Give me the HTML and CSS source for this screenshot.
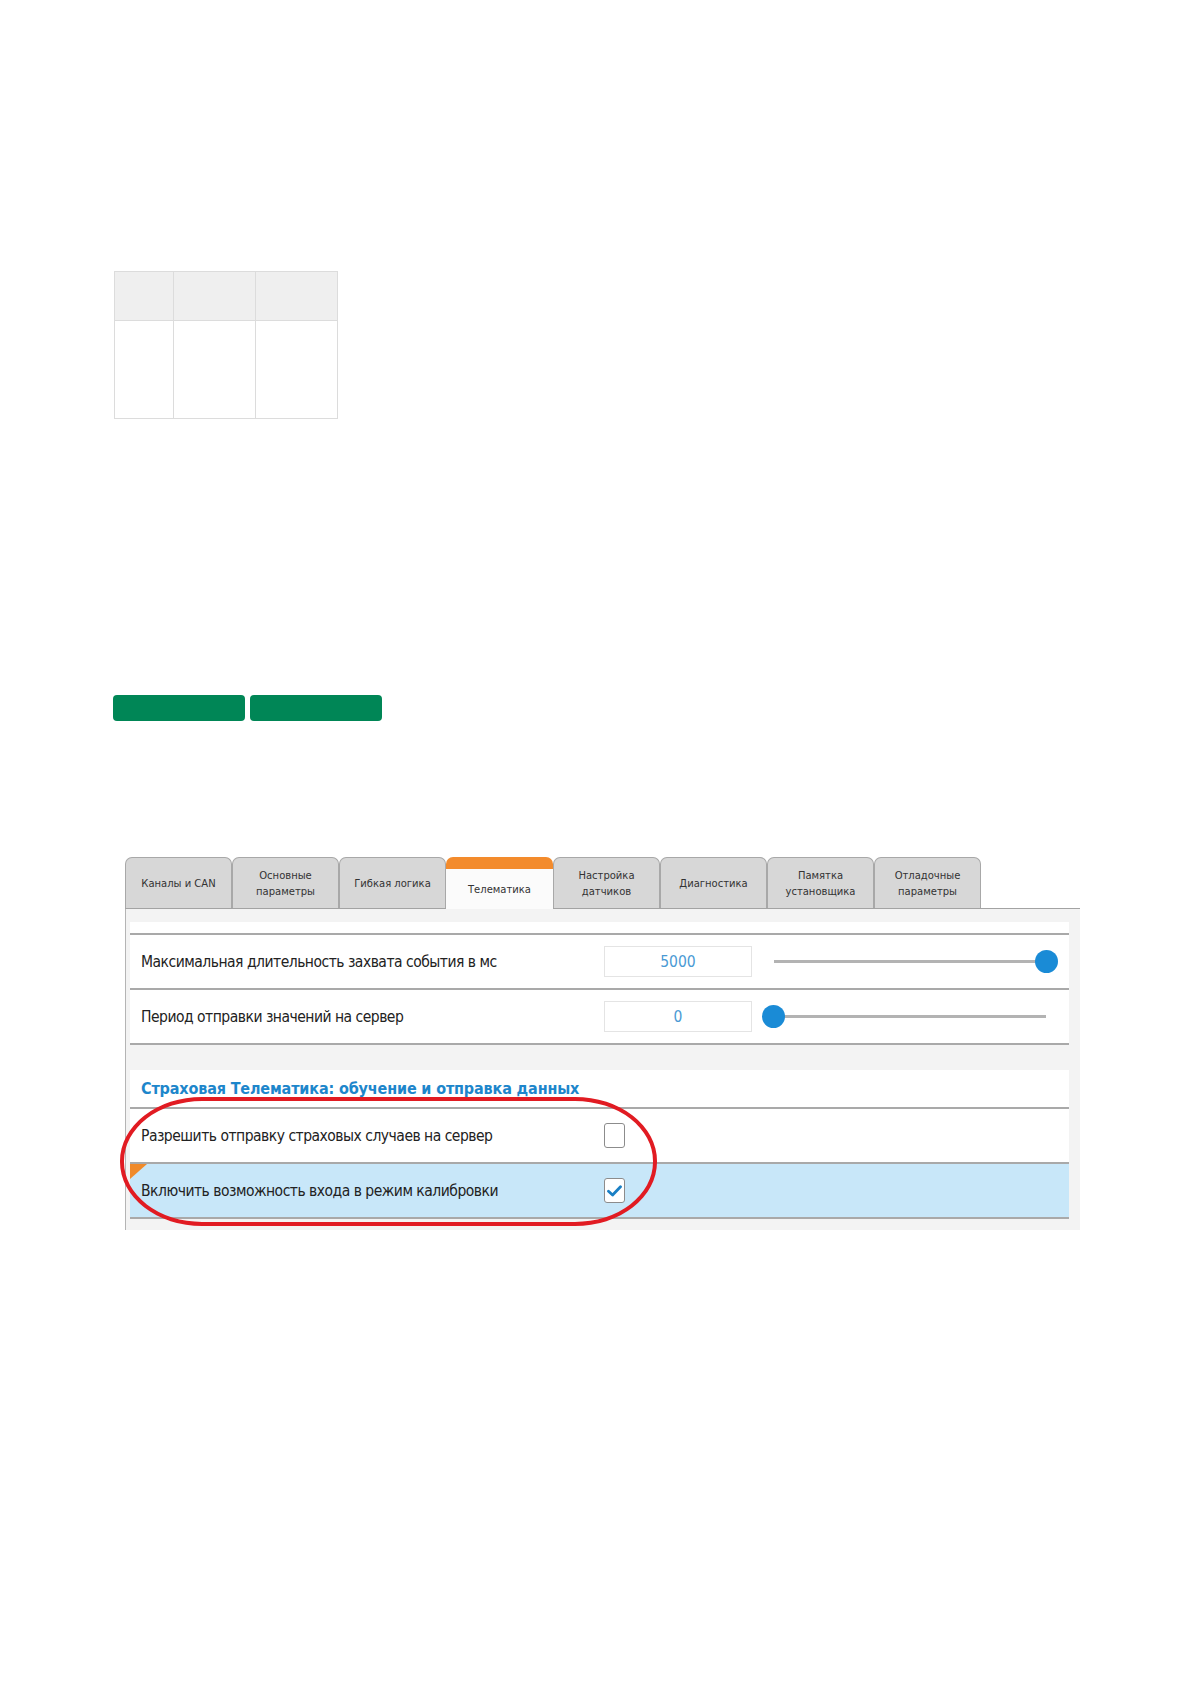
FILE: index.html
```html
<!DOCTYPE html>
<html lang="ru">
<head>
<meta charset="utf-8">
<title>Телематика</title>
<link rel="stylesheet" href="styles.css">
</head>
<body>
<div class="page">
  <table class="grid-table">
    <thead>
      <tr><th class="c1"></th><th class="c2"></th><th class="c3"></th></tr>
    </thead>
    <tbody>
      <tr><td></td><td></td><td></td></tr>
    </tbody>
  </table>

  <div class="btn-row">
    <span class="gbtn"></span>
    <span class="gbtn"></span>
  </div>

  <div class="shot">
    <div class="tabs">
      <div class="tab">Каналы и CAN</div>
      <div class="tab">Основные<br>параметры</div>
      <div class="tab">Гибкая логика</div>
      <div class="tab active">Телематика</div>
      <div class="tab">Настройка<br>датчиков</div>
      <div class="tab">Диагностика</div>
      <div class="tab">Памятка<br>установщика</div>
      <div class="tab">Отладочные<br>параметры</div>
    </div>
    <div class="panel">
      <div class="group first">
        <div class="row">
          <div class="label">Максимальная длительность захвата события в мс</div>
          <div class="num">5000</div>
          <div class="slider end"><span class="thumb"></span></div>
        </div>
        <div class="row last">
          <div class="label">Период отправки значений на сервер</div>
          <div class="num">0</div>
          <div class="slider"><span class="thumb"></span></div>
        </div>
      </div>
      <div class="group second">
        <div class="group-title">Страховая Телематика: обучение и отправка данных</div>
        <div class="row">
          <div class="label">Разрешить отправку страховых случаев на сервер</div>
          <span class="check"></span>
        </div>
        <div class="row last selected">
          <div class="label">Включить возможность входа в режим калибровки</div>
          <span class="check on"><svg width="15" height="12" viewBox="0 0 15 12"><path d="M1.5 6.2 L5.6 10 L13.5 1.8" fill="none" stroke="#1a7fc4" stroke-width="2.8" stroke-linecap="round" stroke-linejoin="round"/></svg></span>
        </div>
      </div>
    </div>
    <div class="mark"></div>
  </div>
</div>
</body>
</html>
```

FILE: styles.css
```css
html, body {
  margin: 0;
  padding: 0;
  background: #ffffff;
}

body {
  font-family: "DejaVu Sans Condensed", "DejaVu Sans", sans-serif;
  color: #222;
}

.page {
  padding: 271px 0 0 114px;
}

.grid-table {
  border-collapse: collapse;
  border: 1px solid #dcdcdc;
}

.grid-table th,
.grid-table td {
  border: 1px solid #dcdcdc;
  padding: 0;
}

.grid-table th {
  background: #efefef;
  height: 48px;
}

.grid-table td {
  height: 97px;
  background: #fff;
}

.grid-table .c1 { width: 58px; }
.grid-table .c2 { width: 81px; }
.grid-table .c3 { width: 81px; }

.btn-row {
  display: flex;
  gap: 5px;
  margin: 276px 0 0 -1px;
}

.gbtn {
  display: block;
  width: 132px;
  height: 26px;
  background: #008656;
  border-radius: 4px;
}

.shot {
  position: relative;
  width: 955px;
  margin: 136px 0 0 11px;
}

.tabs {
  display: flex;
  height: 51px;
  border-bottom: 1px solid #a3a3a3;
}

.tab {
  box-sizing: border-box;
  width: 107px;
  height: 51px;
  display: flex;
  align-items: center;
  justify-content: center;
  text-align: center;
  font-family: "DejaVu Sans", sans-serif;
  font-size: 10px;
  line-height: 16px;
  color: #333;
  background: #d7d7d7;
  border: 1px solid #a8a8a8;
  border-bottom: none;
  border-radius: 7px 7px 0 0;
  padding-top: 2px;
}

.tab.active {
  border: none;
  border-top: 12px solid #f38b2c;
  height: 52px;
  margin-bottom: -1px;
  padding: 2px 0 0;
  background: #fbfbfb;
}

.panel {
  box-sizing: border-box;
  height: 321px;
  background: #f3f3f3;
  border-left: 1px solid #b4b4b4;
  padding: 13px 11px 0 4px;
}

.group {
  background: #fff;
}

.group.first {
  padding-top: 11px;
}

.group.second {
  margin-top: 25px;
}

.group-title {
  height: 37px;
  display: flex;
  align-items: center;
  padding: 0 11px;
  font-weight: bold;
  font-size: 16px;
  letter-spacing: -0.15px;
  color: #1d86cb;
}

.row {
  position: relative;
  display: flex;
  align-items: center;
  height: 53px;
  padding-left: 11px;
  border-top: 2px solid #a9a9a9;
}

.row.last {
  border-bottom: 2px solid #a9a9a9;
}

.row.selected {
  background: #c8e7f9;
}

.row.selected::before {
  content: "";
  position: absolute;
  left: 0;
  top: 0;
  border-top: 15px solid #f08a2a;
  border-right: 17px solid transparent;
}

.label {
  width: 463px;
  flex: none;
  font-size: 15.5px;
  letter-spacing: -0.5px;
  color: #222;
}

.num {
  box-sizing: border-box;
  width: 148px;
  height: 31px;
  flex: none;
  display: flex;
  align-items: center;
  justify-content: center;
  background: #fff;
  border: 1px solid #e4e4e4;
  color: #4a9ad4;
  font-size: 15.5px;
}

.slider {
  position: relative;
  width: 296px;
  height: 23px;
  margin-left: 10px;
  display: flex;
  align-items: center;
  justify-content: flex-start;
}

.slider.end {
  justify-content: flex-end;
}

.slider::before {
  content: "";
  position: absolute;
  left: 12px;
  right: 12px;
  top: 10px;
  height: 3px;
  background: #b3b3b3;
}

.thumb {
  position: relative;
  width: 23px;
  height: 23px;
  border-radius: 50%;
  background: #1a8bd6;
}

.check {
  box-sizing: border-box;
  width: 21px;
  height: 25px;
  flex: none;
  display: flex;
  align-items: center;
  justify-content: center;
  background: #fff;
  border: 1px solid #8c8c8c;
  border-radius: 3px;
}

.mark {
  position: absolute;
  left: -5px;
  top: 240px;
  width: 537px;
  height: 129px;
  box-sizing: border-box;
  border: 4px solid #e11b22;
  border-radius: 82px / 64px;
  pointer-events: none;
}
```
